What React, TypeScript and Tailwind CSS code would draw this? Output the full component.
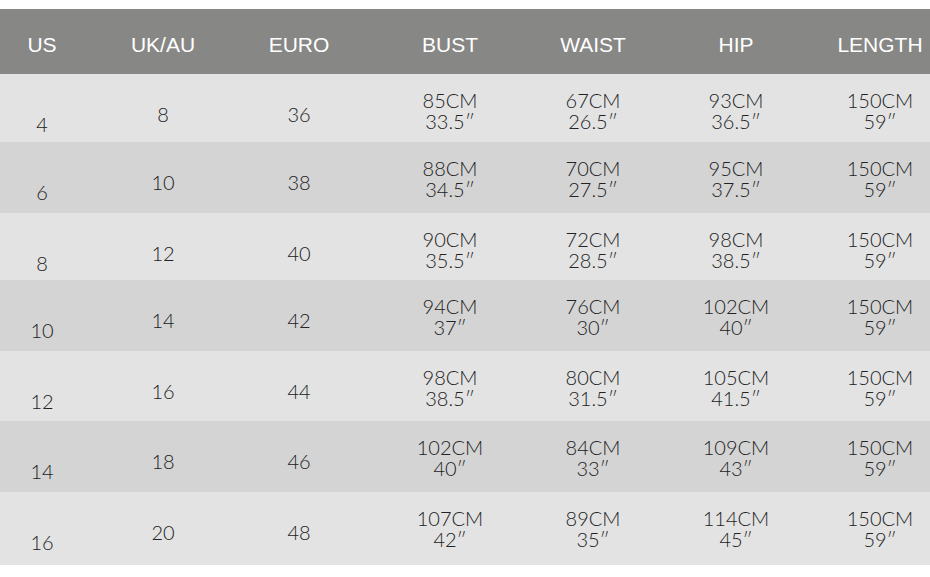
import React from "react";

const headers = ["US", "UK/AU", "EURO", "BUST", "WAIST", "HIP", "LENGTH"];

const rows = [
  { h: "h-[68px]", us: "4", uk: "8", euro: "36", bust: ["85CM", "33.5″"], waist: ["67CM", "26.5″"], hip: ["93CM", "36.5″"], len: ["150CM", "59″"] },
  { h: "h-[71px]", us: "6", uk: "10", euro: "38", bust: ["88CM", "34.5″"], waist: ["70CM", "27.5″"], hip: ["95CM", "37.5″"], len: ["150CM", "59″"] },
  { h: "h-[67px]", us: "8", uk: "12", euro: "40", bust: ["90CM", "35.5″"], waist: ["72CM", "28.5″"], hip: ["98CM", "38.5″"], len: ["150CM", "59″"] },
  { h: "h-[71px]", us: "10", uk: "14", euro: "42", bust: ["94CM", "37″"], waist: ["76CM", "30″"], hip: ["102CM", "40″"], len: ["150CM", "59″"] },
  { h: "h-[70px]", us: "12", uk: "16", euro: "44", bust: ["98CM", "38.5″"], waist: ["80CM", "31.5″"], hip: ["105CM", "41.5″"], len: ["150CM", "59″"] },
  { h: "h-[71px]", us: "14", uk: "18", euro: "46", bust: ["102CM", "40″"], waist: ["84CM", "33″"], hip: ["109CM", "43″"], len: ["150CM", "59″"] },
  { h: "h-[73px]", us: "16", uk: "20", euro: "48", bust: ["107CM", "42″"], waist: ["89CM", "35″"], hip: ["114CM", "45″"], len: ["150CM", "59″"] },
];

const cols = "grid grid-cols-[84px_158px_114px_188px_98px_188px_100px]";

const Two = ({ v }: { v: string[] }) => (
  <div className="pt-[16px] text-center leading-[21px]">
    <div>{v[0]}</div>
    <div>{v[1]}</div>
  </div>
);

export default function App() {
  return (
    <div className="w-[930px] h-[577px] bg-white pt-[9px] overflow-hidden">
      <div className={`${cols} h-[65px] bg-[#878785] text-white text-[21px] leading-[21px] font-['Liberation_Sans',Arial,sans-serif]`}>
        {headers.map((h) => (
          <div key={h} className="pt-[25px] text-center">
            {h}
          </div>
        ))}
      </div>
      {rows.map((r, i) => (
        <div
          key={r.us}
          className={`${cols} ${r.h} ${i % 2 === 0 ? "bg-[#e3e3e3]" : "bg-[#d4d4d4]"} text-[#222] text-[20px] leading-[21px] font-light font-['Lato','Noto_Sans',sans-serif]`}
        >
          <div className="pt-[40px] text-center">{r.us}</div>
          <div className="pt-[30px] text-center">{r.uk}</div>
          <div className="pt-[30px] text-center">{r.euro}</div>
          <Two v={r.bust} />
          <Two v={r.waist} />
          <Two v={r.hip} />
          <Two v={r.len} />
        </div>
      ))}
    </div>
  );
}
